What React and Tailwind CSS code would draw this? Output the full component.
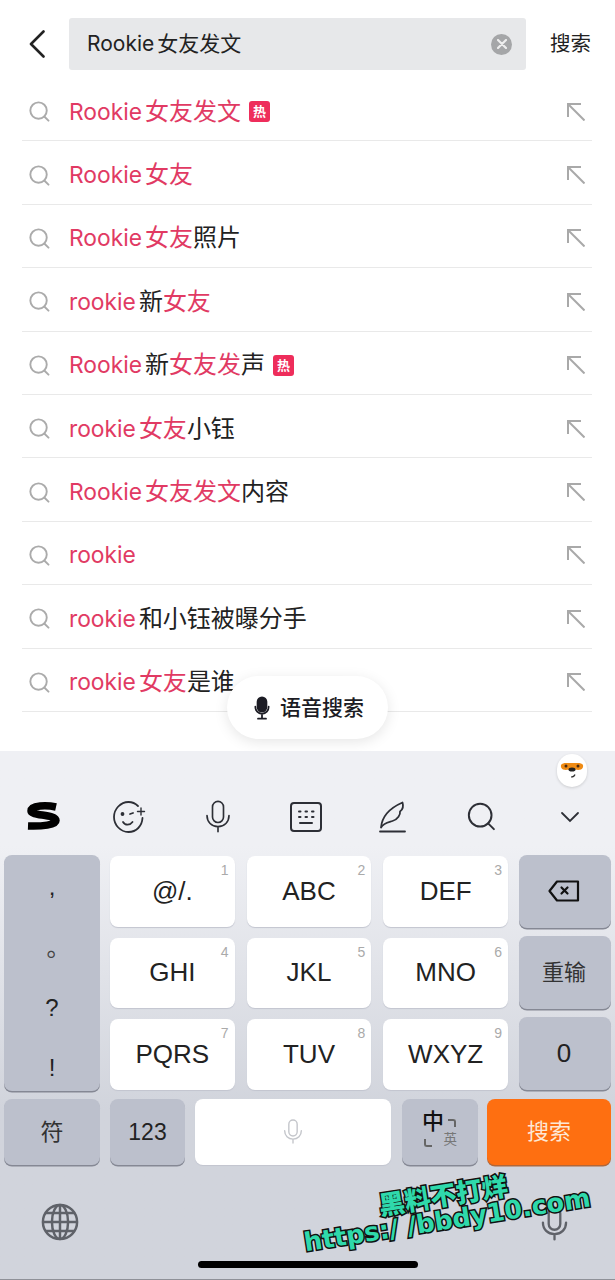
const sans = { fontFamily: '"Inter","Noto Sans CJK SC",sans-serif' };

function SearchIcon({ className, sw = 2 }) {
  return (
    <svg viewBox="0 0 22 22" className={className} fill="none" stroke="currentColor" strokeWidth={sw} strokeLinecap="round">
      <circle cx="10" cy="10" r="8.600" />
      <path d="M16 16.200l4.400 4.400" />
    </svg>
  );
}

function ArrowIcon() {
  return (
    <svg viewBox="0 0 18 18" className="w-[18px] h-[18px] text-[#a9a9a9]" fill="none" stroke="currentColor" strokeWidth="2">
      <path d="M1 14V1h13" />
      <path d="M1 1l16.500 16.500" />
    </svg>
  );
}

function Hot() {
  return (
    <span className="ml-[8px] w-[21px] h-[21px] rounded-[3px] bg-[#ee2d5b] text-white text-[13px] leading-[21px] text-center font-bold">热</span>
  );
}

const R = ({ children }) => <span className="text-[#e13a63]">{children}</span>;
const L = ({ children }) => <span className="text-[22.800px]">{children}</span>;
const C = ({ children }) => <span className="ml-[3px]">{children}</span>;
const K = ({ children }) => <span className="ml-[3px]">{children}</span>;

const rows = [
  [<R><L>Rookie</L><C>女友发文</C></R>, true],
  [<R><L>Rookie</L><C>女友</C></R>],
  [<><R><L>Rookie</L><C>女友</C></R>照片</>],
  [<><R><L>rookie</L></R><K>新</K><R>女友</R></>],
  [<><R><L>Rookie</L></R><K>新</K><R>女友发</R>声</>, true],
  [<><R><L>rookie</L><C>女友</C></R>小钰</>],
  [<><R><L>Rookie</L><C>女友发文</C></R>内容</>],
  [<R><L>rookie</L></R>],
  [<><R><L>rookie</L></R><K>和小钰被曝分手</K></>],
  [<><R><L>rookie</L><C>女友</C></R>是谁</>],
];

function Mic({ className, sw = 2 }) {
  return (
    <svg viewBox="0 0 28 36" className={className} fill="none" stroke="currentColor" strokeWidth={sw} strokeLinecap="round">
      <rect x="8" y="1.500" width="12" height="23" rx="6" />
      <path d="M2 17c0 7 5 12 12 12s12-5 12-12M14 29v5.500" />
    </svg>
  );
}

const gray = "rounded-[8px] bg-[#bcc0cc] shadow-[0_1.500px_0.500px_#858894] flex items-center justify-center";
const white = "rounded-[8px] bg-white shadow-[0_1px_1px_#c2c5cf] relative flex items-center justify-center text-[26px] text-[#222]";

function Key({ label, n }) {
  return (
    <div className={white}>
      {label}
      <span className="absolute right-[6px] top-[6px] text-[14px] leading-[16px] text-[#aaa]">{n}</span>
    </div>
  );
}

export default function App() {
  return (
    <div className="w-[615px] h-[1280px] bg-white overflow-hidden relative flex flex-col" style={sans}>
      <div className="h-[78px] pt-[18px] flex items-start shrink-0">
        <div className="w-[69px] h-[52px] flex items-center justify-center">
          <svg viewBox="0 0 16 28" className="w-[16px] h-[28px] ml-[5px] text-[#222]" fill="none" stroke="currentColor" strokeWidth="2.600" strokeLinecap="round" strokeLinejoin="round">
            <path d="M14.500 1.500L2 14l12.500 12.500" />
          </svg>
        </div>
        <div className="w-[457px] h-[52px] rounded-[3px] bg-[#e7e8ea] flex items-center pl-[18px] pr-[14px] justify-between">
          <span className="text-[21px] text-[#222]">Rookie<span className="ml-[3px]">女友发文</span></span>
          <div className="w-[21px] h-[21px] rounded-full bg-[#a5a6a8] flex items-center justify-center">
            <svg viewBox="0 0 10 10" className="w-[10px] h-[10px]" stroke="#eee" strokeWidth="2.200" strokeLinecap="round"><path d="M1 1l8 8M9 1l-8 8" /></svg>
          </div>
        </div>
        <div className="ml-[24px] h-[52px] flex items-center text-[20.500px] text-[#222]">搜索</div>
      </div>

      <div className="shrink-0">
        {rows.map((r, i) => (
          <div key={i} className="ml-[22px] mr-[23px] h-[63.400px] border-b border-[#e9e9e9] flex items-center text-[24px] text-[#222] pt-[5px]">
            <SearchIcon className="w-[21px] h-[21px] ml-[7px] text-[#ababab] mr-[19px]" />
            <span className="flex items-center">{r[0]}{r[1] && <Hot />}</span>
            <div className="ml-auto mr-[7px] flex"><ArrowIcon /></div>
          </div>
        ))}
      </div>

      <div className="absolute left-[227px] top-[676px] w-[161px] h-[63px] rounded-full bg-white shadow-[0_3px_14px_rgba(0,0,0,0.10)] flex items-center justify-center gap-[10px] pl-[3px]">
        <svg viewBox="0 0 18 26" className="w-[16px] h-[24px] text-[#1c1c24]" fill="none" stroke="currentColor" strokeWidth="2" strokeLinecap="round">
          <rect x="4" y="1" width="10" height="16" rx="5" fill="currentColor" />
          <path d="M1.500 11.500c0 4.500 3 8 7.500 8s7.500-3.500 7.500-8M9 19.500V25M4.500 25h9" />
        </svg>
        <span className="text-[21px] font-medium text-[#1c1c24]">语音搜索</span>
      </div>

      <div className="flex-1 mt-[39px] relative flex flex-col border-b border-[#8f9198] bg-gradient-to-b from-[#eff0f4] from-[18%] to-[#d1d4dc] to-[68%]">
        <div className="absolute left-[557px] top-[3px] w-[30px] h-[33px] rounded-full bg-white shadow-[0_1px_3px_rgba(0,0,0,0.15)] flex items-center justify-center">
          <svg viewBox="0 0 26 22" className="w-[26px] h-[22px]">
            <path d="M2 6c1-1.500 3-2 5-2h12c2 0 4 .5 5 2 .5 2-.5 4-2 4.500-3 1-5 0-9 0s-6 1-9 0C2.500 10 1.500 8 2 6z" fill="#ef8b14" />
            <circle cx="7" cy="7" r="1.500" fill="#4a2a10" />
            <circle cx="19" cy="7" r="1.500" fill="#4a2a10" />
            <ellipse cx="13" cy="10.500" rx="3.500" ry="2" fill="#222" />
            <path d="M12 18c2 0 3.500-1 4-2.500" stroke="#333" strokeWidth="1.200" fill="none" />
          </svg>
        </div>

        <div className="h-[104px] shrink-0 relative text-[#2d2f36]">
          <div className="absolute inset-x-0 top-[48px] h-[36px] flex items-center">
            <div className="w-[86px] flex justify-center">
              <svg viewBox="0 0 36 30" className="w-[36px] h-[30px] -mt-[1px]" fill="none" stroke="#000" strokeWidth="7.500">
                <path d="M31 6C22 4 6 4 6 10c0 5 25 3 25 9.500C31 24 17 25.500 3 25" />
              </svg>
            </div>
            <div className="w-[88px] flex justify-center">
              <svg viewBox="0 0 34 34" className="w-[34px] h-[34px]" fill="none" stroke="currentColor" strokeWidth="1.800" strokeLinecap="round">
                <path d="M26 6C23.500 3.500 20 2 16.500 2 8.500 2 2 9 2 17s6.500 15 14.500 15S30 26 30.500 18" />
                <path d="M11 22c2 3.500 7 3.500 9.500 0" />
                <circle cx="10.500" cy="14" r="1" fill="currentColor" />
                <path d="M18 14l3-1" />
                <path d="M29 8v7M25.500 11.500h7" strokeWidth="1.400" />
              </svg>
            </div>
            <div className="w-[88px] flex justify-center ml-[2px]"><Mic className="w-[26px] h-[33px]" sw={1.800} /></div>
            <div className="w-[88px] flex justify-center">
              <svg viewBox="0 0 32 30" className="w-[32px] h-[30px]" fill="none" stroke="currentColor" strokeWidth="2">
                <rect x="1" y="1" width="30" height="28" rx="3" />
                <path d="M9 9.500h1.500M15.500 9.500h1.500M22 9.500h1.500M9 15h1.500M15.500 15h1.500M22 15h1.500M10 21h12" strokeLinecap="round" />
              </svg>
            </div>
            <div className="w-[88px] flex justify-center -ml-[1px]">
              <svg viewBox="0 0 28 32" className="w-[28px] h-[32px]" fill="none" stroke="currentColor" strokeWidth="1.800" strokeLinecap="round" strokeLinejoin="round">
                <path d="M2 30.500h25M3 26.500C4 15 12 7 24.500 1.500c1.500 5-1 8-2.500 9 .5 3-2 8-7.500 9.500-5 1.500-9 2-11.500 6.500z" />
              </svg>
            </div>
            <div className="w-[88px] flex justify-center ml-[2px]">
              <SearchIcon className="w-[29px] h-[29px]" sw={1.500} />
            </div>
            <div className="w-[90px] flex justify-center ml-[1px]">
              <svg viewBox="0 0 20 12" className="w-[20px] h-[12px]" fill="none" stroke="currentColor" strokeWidth="1.800" strokeLinecap="round"><path d="M2 2l8 8 8-8" /></svg>
            </div>
          </div>
        </div>

        <div className="flex px-[4px] gap-[10px] shrink-0" style={{ fontFamily: '"Liberation Sans","Noto Sans CJK SC",sans-serif' }}>
          <div className={`${gray} w-[96px] h-[236px] flex-col text-[24px] text-[#222] justify-start pt-[17px]`}>
            <span className="h-[61px] leading-[30px]">,</span>
            <span className="h-[60px] leading-[30px] text-[#444] ml-[13px]">。</span>
            <span className="h-[60px] leading-[30px]">?</span>
            <span className="leading-[30px]">!</span>
          </div>
          <div className="w-[398px] grid grid-cols-3 grid-rows-3 gap-x-[12px] gap-y-[11px] h-[234px] mt-[1px]">
            <Key label="@/." n="1" />
            <Key label="ABC" n="2" />
            <Key label="DEF" n="3" />
            <Key label="GHI" n="4" />
            <Key label="JKL" n="5" />
            <Key label="MNO" n="6" />
            <Key label="PQRS" n="7" />
            <Key label="TUV" n="8" />
            <Key label="WXYZ" n="9" />
          </div>
          <div className="w-[92px] ml-[1px] flex flex-col gap-[8px]">
            <div className={`${gray} h-[73px]`}>
              <svg viewBox="0 0 32 22" className="w-[32px] h-[22px] -ml-[2px]" fill="none" stroke="#111" strokeWidth="2.200" strokeLinejoin="round">
                <path d="M9 1.500h21v19H9L1.500 11z" />
                <path d="M13.500 7.500l6 6M19.500 7.500l-6 6" strokeLinecap="round" />
              </svg>
            </div>
            <div className={`${gray} h-[73px] text-[22px] text-[#333] pr-[2px]`}>重输</div>
            <div className={`${gray} h-[73px] text-[26px] text-[#222] pr-[2px]`}>0</div>
          </div>
        </div>

        <div className="flex px-[4px] mt-[8px] h-[66px] shrink-0" style={{ fontFamily: '"Liberation Sans","Noto Sans CJK SC",sans-serif' }}>
          <div className={`${gray} w-[96px] text-[23px] text-[#333]`}>符</div>
          <div className={`${gray} w-[75px] ml-[10px] text-[23px] text-[#222]`}>123</div>
          <div className="w-[196px] ml-[10px] rounded-[8px] bg-white shadow-[0_1px_1px_#c2c5cf] flex items-center justify-center">
            <Mic className="w-[20px] h-[25px] text-[#c4c6cb]" />
          </div>
          <div className={`${gray} w-[76px] ml-[11px] relative`}>
            <span className="absolute left-[20px] top-[11px] text-[22px] leading-[24px] font-medium text-[#111]">中</span>
            <span className="absolute right-[21px] top-[33px] text-[13.500px] leading-[16px] text-[#777]">英</span>
            <span className="absolute right-[22px] top-[20px] w-[8px] h-[8px] border-t-2 border-r-2 rounded-tr-[3px] border-[#666]"></span>
            <span className="absolute left-[22px] top-[40px] w-[8px] h-[8px] border-b-2 border-l-2 rounded-bl-[3px] border-[#666]"></span>
          </div>
          <div className="w-[124px] ml-[9px] rounded-[8px] bg-[#fe6f11] shadow-[0_1.500px_0.500px_#b0673a] flex items-center justify-center text-[22px] text-[#fde8d5]">搜索</div>
        </div>

        <div className="flex-1 relative flex items-center justify-between">
          <svg viewBox="0 0 40 40" className="ml-[41px] w-[38px] h-[38px] text-[#5f6269]" fill="none" stroke="currentColor" strokeWidth="2.600">
            <circle cx="20" cy="20" r="18" />
            <ellipse cx="20" cy="20" rx="8.500" ry="18" />
            <path d="M20 2v36M2 20h36M5 10.500h30M5 29.500h30" />
          </svg>
          <Mic className="mr-[47px] w-[27px] h-[35px] text-[#5f6269] mt-[4px]" sw={2.400} />
        </div>

        <div className="absolute left-[198px] top-[510px] w-[220px] h-[7px] rounded-full bg-black"></div>

        <div className="absolute left-[285px] top-[429px] w-[320px] -rotate-[9deg] text-center font-bold text-[#2fd9ab] [-webkit-text-stroke:3px_#111] [paint-order:stroke_fill]" style={{ fontFamily: '"DejaVu Sans","Noto Sans CJK SC",sans-serif' }}>
          <div className="text-[26px] leading-[27px]" style={{ fontFamily: '"Noto Sans CJK SC",sans-serif', fontWeight: 900 }}>黑料不打烊</div>
          <div className="text-[25.500px] leading-[27px] whitespace-nowrap">https:/ /bbdy10.com</div>
        </div>
      </div>
    </div>
  );
}
